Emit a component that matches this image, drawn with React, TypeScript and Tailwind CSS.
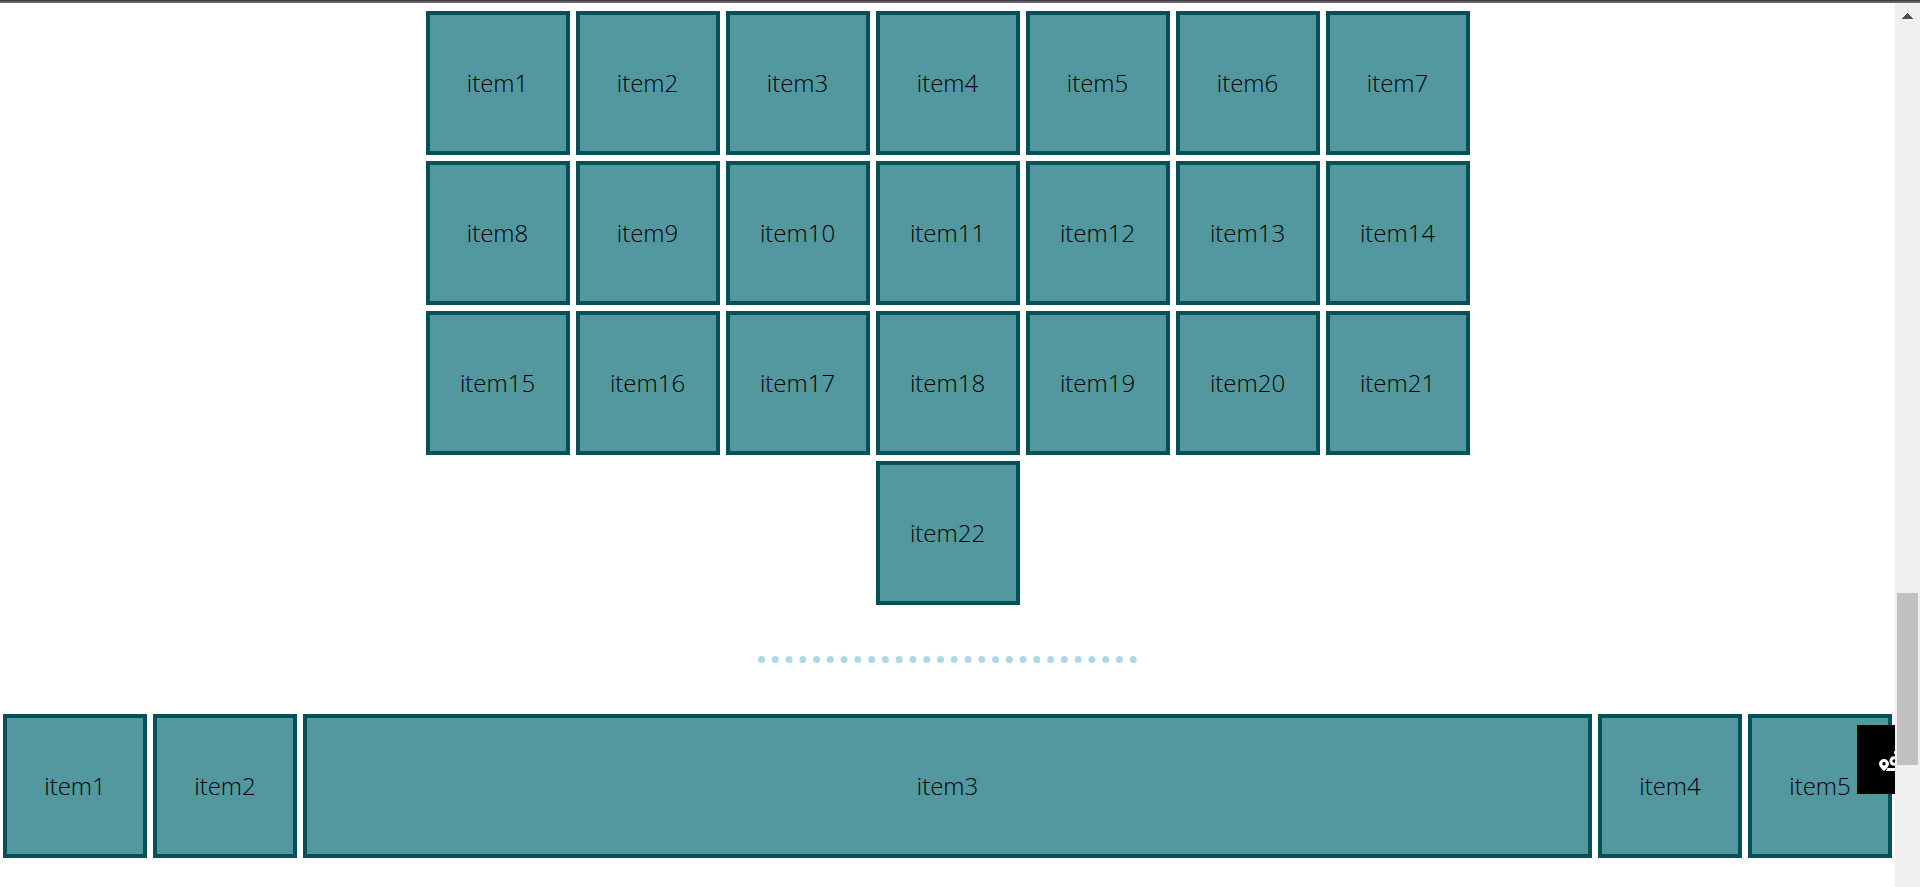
const rows = Array.from({ length: 22 }, (_, i) => `item${i + 1}`);

function Tile({ label, grow = false }: { label: string; grow?: boolean }) {
  return (
    <div
      className={`flex h-36 items-center justify-center border-4 border-[#065158] bg-[#52989e] text-2xl font-[350] text-black ${
        grow ? "grow" : "w-36 shrink-0"
      }`}
    >
      {label}
    </div>
  );
}

function ScrollTrack() {
  return (
    <div aria-hidden="true" className="flex w-[25px] shrink-0 flex-col items-center bg-[#f0f0f0] pt-[10px]">
      <svg width="11" height="6" viewBox="0 0 11 6" fill="#505050" shapeRendering="crispEdges">
        <path d="M5 0h1v1h1v1h1v1h1v1h1v1h1v1H0V5h1V4h1V3h1V2h1V1h1z" />
      </svg>
      <div className="grow-[574]" />
      <div className="h-[172px] w-[21px] bg-[#c1c1c1]" />
      <div className="grow-[122]" />
    </div>
  );
}

export default function App() {
  return (
    <div className="flex h-screen flex-col overflow-hidden bg-white font-['Open_Sans',sans-serif]">
      <div className="h-[3px] shrink-0 border-t border-[#3f3c3f] bg-[#686568]" />
      <div className="flex min-h-0 grow">
        <main className="relative min-w-0 grow overflow-hidden pt-2">
          <section className="mx-auto flex max-w-[1044px] flex-wrap justify-center gap-[6px]">
            {rows.map((label) => (
              <Tile key={label} label={label} />
            ))}
          </section>
          <hr className="mx-auto mt-[51px] mb-[51px] w-1/5 border-0 border-t-[7px] border-dotted border-[#add8e6]" />
          <section className="flex gap-[6px] px-[3px]">
            <Tile label="item1" />
            <Tile label="item2" />
            <Tile label="item3" grow />
            <Tile label="item4" />
            <Tile label="item5" />
          </section>
          <button
            type="button"
            aria-label="Route"
            className="absolute right-0 bottom-[93px] flex h-[69px] w-[38px] items-start overflow-hidden bg-black pt-[22px] pl-[22px]"
          >
            <svg className="shrink-0" width="28" height="28" viewBox="0 0 28 28" fill="none">
              <path
                fill="#fff"
                fillRule="evenodd"
                d="M5 12a5 5 0 0 1 5 5c0 2.500-3 5-5 7-2-2-5-4.500-5-7a5 5 0 0 1 5-5zm0 3a1.700 1.700 0 1 0 0 3.400 1.700 1.700 0 0 0 0-3.400z"
              />
              <path fill="#fff" d="M8.500 21H24v3H7z" />
              <circle cx="15.200" cy="14" r="3.300" stroke="#fff" strokeWidth="3" />
              <path fill="#fff" d="M20 2c-3 0-5 1.500-5 3.500s1 2.500 5 2.500z" />
            </svg>
          </button>
        </main>
        <ScrollTrack />
      </div>
    </div>
  );
}
